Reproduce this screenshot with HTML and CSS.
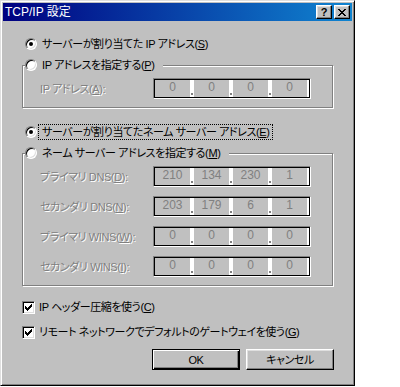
FILE: index.html
```html
<!DOCTYPE html>
<html lang="ja">
<head>
<meta charset="utf-8">
<title>TCP/IP 設定</title>
<link rel="stylesheet" href="styles.css">
</head>
<body>
<div class="window">
  <div class="titlebar">
    <span class="title">TCP/IP 設定</span>
    <div class="tb-buttons">
      <div class="tb-btn help">?</div>
      <div class="tb-btn close">
        <svg width="8" height="7" viewBox="0 0 8 7" shape-rendering="crispEdges"><path fill="#000" d="M0 0h2v1h-2zM6 0h2v1h-2zM1 1h2v1h-2zM5 1h2v1h-2zM2 2h4v1h-4zM3 3h2v1h-2zM2 4h4v1h-4zM1 5h2v1h-2zM5 5h2v1h-2zM0 6h2v1h-2zM6 6h2v1h-2z"/></svg>
      </div>
    </div>
  </div>
  <div class="content">
    <div class="row opt">
      <span class="radio checked"></span><span class="lbl">サーバーが割り当てた IP アドレス(<u>S</u>)</span>
    </div>

    <div class="group g1">
      <div class="legend"><span class="radio"></span><span class="lbl">IP アドレスを指定する(<u>P</u>)</span></div>
      <div class="frow first">
        <span class="flabel dis">IP アドレス(<u>A</u>):</span>
        <div class="ip"><span class="seg">0</span><span class="gap"><i></i></span><span class="seg">0</span><span class="gap"><i></i></span><span class="seg">0</span><span class="gap"><i></i></span><span class="seg">0</span></div>
      </div>
    </div>

    <div class="row opt r3">
      <span class="radio checked"></span><span class="lbl focus">サーバーが割り当てたネーム サーバー アドレス(<u>E</u>)</span>
    </div>

    <div class="group g2">
      <div class="legend"><span class="radio"></span><span class="lbl">ネーム サーバー アドレスを指定する(<u>M</u>)</span></div>
      <div class="frow first">
        <span class="flabel dis">プライマリ DNS(<u>D</u>):</span>
        <div class="ip"><span class="seg">210</span><span class="gap"><i></i></span><span class="seg">134</span><span class="gap"><i></i></span><span class="seg">230</span><span class="gap"><i></i></span><span class="seg">1</span></div>
      </div>
      <div class="frow">
        <span class="flabel dis">セカンダリ DNS(<u>N</u>):</span>
        <div class="ip"><span class="seg">203</span><span class="gap"><i></i></span><span class="seg">179</span><span class="gap"><i></i></span><span class="seg">6</span><span class="gap"><i></i></span><span class="seg">1</span></div>
      </div>
      <div class="frow">
        <span class="flabel dis">プライマリ WINS(<u>W</u>):</span>
        <div class="ip"><span class="seg">0</span><span class="gap"><i></i></span><span class="seg">0</span><span class="gap"><i></i></span><span class="seg">0</span><span class="gap"><i></i></span><span class="seg">0</span></div>
      </div>
      <div class="frow">
        <span class="flabel dis">セカンダリ WINS(<u>I</u>):</span>
        <div class="ip"><span class="seg">0</span><span class="gap"><i></i></span><span class="seg">0</span><span class="gap"><i></i></span><span class="seg">0</span><span class="gap"><i></i></span><span class="seg">0</span></div>
      </div>
    </div>

    <div class="row chk c1">
      <span class="checkbox"><svg width="7" height="7" viewBox="0 0 7 7" shape-rendering="crispEdges"><path fill="#000" d="M0 2h1v3h-1zM1 3h1v3h-1zM2 4h1v3h-1zM3 3h1v3h-1zM4 2h1v3h-1zM5 1h1v3h-1zM6 0h1v3h-1z"/></svg></span><span class="lbl">IP ヘッダー圧縮を使う(<u>C</u>)</span>
    </div>
    <div class="row chk c2">
      <span class="checkbox"><svg width="7" height="7" viewBox="0 0 7 7" shape-rendering="crispEdges"><path fill="#000" d="M0 2h1v3h-1zM1 3h1v3h-1zM2 4h1v3h-1zM3 3h1v3h-1zM4 2h1v3h-1zM5 1h1v3h-1zM6 0h1v3h-1z"/></svg></span><span class="lbl">リモート ネットワークでデフォルトのゲートウェイを使う(<u>G</u>)</span>
    </div>

    <div class="buttons">
      <div class="btn default">OK</div>
      <div class="btn">キャンセル</div>
    </div>
  </div>
</div>
</body>
</html>
```

FILE: styles.css
```css
html, body {
  margin: 0;
  background: #fff;
}
body {
  font-family: "Liberation Sans", "Noto Sans CJK JP", sans-serif;
  font-size: 11px;
  letter-spacing: -0.4px;
  font-feature-settings: "palt";
  color: #000;
}
u { text-decoration: underline; text-underline-offset: 1px; }

.window {
  width: 355px;
  height: 386px;
  box-sizing: border-box;
  background: #c0c0c0;
  border: 1px solid;
  border-color: #dfdfdf #000 #000 #dfdfdf;
  box-shadow: inset 1px 1px 0 #fff, inset -1px -1px 0 #808080;
  padding: 2px;
  display: flex;
  flex-direction: column;
}

.titlebar {
  height: 18px;
  flex: none;
  background: linear-gradient(to right, #000080, #1084d0);
  display: flex;
  align-items: center;
  justify-content: space-between;
  padding: 0 2px;
  color: #fff;
}
.title {
  font-size: 12px;
  letter-spacing: 0;
  line-height: 14px;
  white-space: nowrap;
}
.tb-buttons {
  display: flex;
  gap: 2px;
}
.tb-btn {
  width: 16px;
  height: 14px;
  box-sizing: border-box;
  background: #c0c0c0;
  border: 1px solid;
  border-color: #fff #000 #000 #fff;
  box-shadow: inset -1px -1px 0 #808080, inset 1px 1px 0 #dfdfdf;
  display: flex;
  align-items: center;
  justify-content: center;
  color: #000;
}
.help {
  font-family: "Liberation Sans", sans-serif;
  font-weight: bold;
  font-size: 11px;
  letter-spacing: 0;
  line-height: 12px;
  padding-bottom: 1px;
}

.content {
  padding: 16px 0 0 19px;
  display: flex;
  flex-direction: column;
  align-items: flex-start;
}

.row {
  display: flex;
  align-items: center;
  height: 14px;
}
.opt .radio { margin-left: 3px; }
.r3 { margin-top: 17px; }

.radio {
  width: 12px;
  height: 12px;
  flex: none;
  box-sizing: border-box;
  border-radius: 50%;
  background: #fff;
  border: 1px solid;
  border-color: #808080 #fff #fff #808080;
  box-shadow: inset 1px 1px 0 #000, inset -1px -1px 0 #dfdfdf;
  display: flex;
  align-items: center;
  justify-content: center;
}
.radio.checked::after {
  content: "";
  width: 4px;
  height: 4px;
  border-radius: 50%;
  background: #000;
}

.lbl {
  margin-left: 2px;
  padding: 0 3px;
  line-height: 14px;
  white-space: nowrap;
}
.focus {
  outline: 1px dotted #000;
}

.group {
  width: 311px;
  box-sizing: border-box;
  border: 1px solid #808080;
  box-shadow: inset 1px 1px 0 #fff, 1px 1px 0 #fff;
  padding-bottom: 8px;
  margin-top: 14px;
}
.legend {
  display: flex;
  align-items: center;
  width: fit-content;
  height: 14px;
  margin: -8px 0 0 2px;
  padding-right: 6px;
  background: #c0c0c0;
}

.frow {
  display: flex;
  align-items: center;
  height: 21px;
  padding-left: 17px;
  margin-top: 9px;
}
.frow.first { margin-top: 6px; }
.flabel {
  width: 113px;
  flex: none;
  white-space: nowrap;
  line-height: 14px;
}
.dis {
  color: #808080;
  text-shadow: 1px 1px 0 #fff;
}

.ip {
  width: 158px;
  height: 21px;
  box-sizing: border-box;
  background: #fff;
  border: 1px solid;
  border-color: #808080 #fff #fff #808080;
  box-shadow: inset 0 0 0 1px #000;
  padding: 1px;
  display: flex;
}
.seg {
  width: 35px;
  flex: none;
  background: #c0c0c0;
  color: #808080;
  font-family: "Liberation Sans", sans-serif;
  font-size: 12px;
  letter-spacing: 0;
  text-align: center;
  line-height: 15px;
}
.gap {
  width: 4px;
  flex: none;
  display: flex;
  align-items: flex-end;
}
.gap i {
  width: 2px;
  height: 2px;
  margin: 0 0 2px 1px;
  background: #808080;
}

.checkbox {
  width: 13px;
  height: 13px;
  flex: none;
  box-sizing: border-box;
  background: #fff;
  border: 1px solid;
  border-color: #808080 #fff #fff #808080;
  box-shadow: inset 1px 1px 0 #000, inset -1px -1px 0 #dfdfdf;
  display: flex;
  align-items: center;
  justify-content: center;
}
.chk .lbl { margin-left: 1px; }
.c1 { margin-top: 14px; }
.c2 { margin-top: 11px; }

.buttons {
  display: flex;
  gap: 6px;
  margin: 10px 0 0 130px;
}
.btn {
  width: 88px;
  height: 21px;
  box-sizing: border-box;
  border: 1px solid;
  border-color: #fff #000 #000 #fff;
  box-shadow: inset -1px -1px 0 #808080, inset 1px 1px 0 #dfdfdf;
  display: flex;
  align-items: center;
  justify-content: center;
  line-height: 14px;
}
.btn.default {
  border-color: #000;
  box-shadow: inset 1px 1px 0 #fff, inset -1px -1px 0 #000, inset -2px -2px 0 #808080;
}
```
